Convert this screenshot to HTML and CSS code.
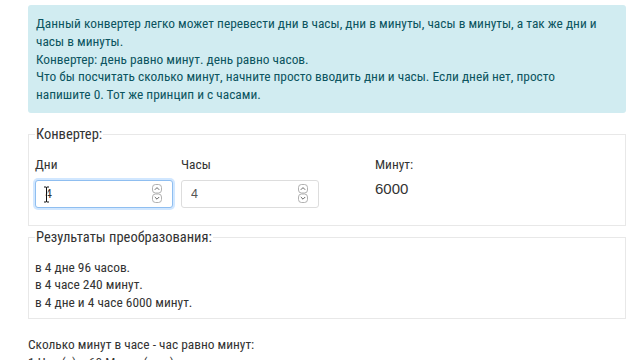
FILE: index.html
```html
<!DOCTYPE html>
<html lang="ru">
<head>
    <meta charset="UTF-8">
    <meta name="viewport" content="width=device-width, initial-scale=1.0">
    <title>Конвертер дней в минуты</title>
    <link rel="stylesheet" href="styles.css">
</head>
<body>
<div class="container">
    <div class="alert">
        Данный конвертер легко может перевести дни в часы, дни в минуты, часы в минуты, а так же дни и часы в минуты.<br>
        Конвертер: день равно минут. день равно часов.<br>
        Что бы посчитать сколько минут, начните просто вводить дни и часы. Если дней нет, просто напишите 0. Тот же принцип и с часами.
    </div>

    <fieldset class="box converter">
        <legend>Конвертер:</legend>
        <div class="row">
            <div class="field">
                <label for="days">Дни</label>
                <div class="input-wrap">
                    <input type="text" id="days" class="focused" value="4">
                    <span class="spin">
                        <svg width="10" height="19" viewBox="0 0 10 19">
                            <rect x="0.5" y="0.5" width="9" height="8.5" rx="3" fill="#fff" stroke="#a8a8a8" stroke-width="0.9"/>
                            <path d="M2.8 5.8 L5 3.6 L7.2 5.8" fill="none" stroke="#666" stroke-width="1"/>
                            <rect x="0.5" y="10" width="9" height="8.5" rx="3" fill="#fff" stroke="#a8a8a8" stroke-width="0.9"/>
                            <path d="M2.8 13 L5 15.2 L7.2 13" fill="none" stroke="#666" stroke-width="1"/>
                        </svg>
                    </span>
                    <span class="ibeam">
                        <svg width="7" height="17" viewBox="0 0 7 17">
                            <path d="M1 1 H3 Q3.5 1 3.5 2 V15 Q3.5 16 3 16 H1 M6 1 H4 Q3.5 1 3.5 2 M3.5 15 Q3.5 16 4 16 H6" fill="none" stroke="#fff" stroke-width="2.4"/>
                            <path d="M1 1 H3 Q3.5 1 3.5 2 V15 Q3.5 16 3 16 H1 M6 1 H4 Q3.5 1 3.5 2 M3.5 15 Q3.5 16 4 16 H6" fill="none" stroke="#111" stroke-width="1"/>
                        </svg>
                    </span>
                </div>
            </div>
            <div class="field">
                <label for="hours">Часы</label>
                <div class="input-wrap">
                    <input type="text" id="hours" value="4">
                    <span class="spin">
                        <svg width="10" height="19" viewBox="0 0 10 19">
                            <rect x="0.5" y="0.5" width="9" height="8.5" rx="3" fill="#fff" stroke="#a8a8a8" stroke-width="0.9"/>
                            <path d="M2.8 5.8 L5 3.6 L7.2 5.8" fill="none" stroke="#666" stroke-width="1"/>
                            <rect x="0.5" y="10" width="9" height="8.5" rx="3" fill="#fff" stroke="#a8a8a8" stroke-width="0.9"/>
                            <path d="M2.8 13 L5 15.2 L7.2 13" fill="none" stroke="#666" stroke-width="1"/>
                        </svg>
                    </span>
                </div>
            </div>
            <div class="field result">
                <label>Минут:</label>
                <div class="total">6000</div>
            </div>
        </div>
    </fieldset>

    <fieldset class="box results">
        <legend>Результаты преобразования:</legend>
        <p>в 4 дне 96 часов.</p>
        <p>в 4 часе 240 минут.</p>
        <p>в 4 дне и 4 часе 6000 минут.</p>
    </fieldset>

    <div class="info">
        <p>Сколько минут в часе - час равно минут:</p>
        <p>1 Час (ч) = 60 Минут (мин)</p>
    </div>
</div>
</body>
</html>
```

FILE: styles.css
```css
body {
    margin: 0;
    font-family: Roboto, 'Liberation Sans', Arial, sans-serif;
    font-stretch: condensed;
    font-size: 13.4px;
    color: #333;
    background: #fff;
}

.container {
    width: 598px;
    margin-left: 28px;
    padding-top: 5px;
}

.alert {
    background: #d1ecf1;
    color: #0c5460;
    border-radius: 3px;
    padding: 10px 22px 9px 8px;
    line-height: 17.75px;
}

.box {
    margin: 14px 0 0 0;
    padding: 14px 6px 17px 6px;
    border: 1px solid #e8e8e8;
}

.box legend {
    padding: 0 1px;
    font-size: 14.5px;
    line-height: 16px;
}

.row {
    display: grid;
    grid-template-columns: 146px 194px auto;
}

.field label {
    display: block;
    line-height: 16px;
    margin-bottom: 7px;
}

.input-wrap {
    position: relative;
    width: 138px;
}

.input-wrap input {
    box-sizing: border-box;
    width: 138px;
    height: 28px;
    padding: 0 9px;
    border: 1px solid #ddd;
    border-radius: 3px;
    font-family: 'Liberation Sans', Arial, sans-serif;
    font-stretch: normal;
    font-size: 12.5px;
    color: #555;
    outline: none;
}

.input-wrap input.focused {
    border-color: #8fbef0;
    box-shadow: 0 0 0 2px rgba(0, 123, 255, 0.18);
    color: #333;
}

.spin {
    position: absolute;
    right: 11px;
    top: 4px;
    line-height: 0;
}

.ibeam {
    position: absolute;
    left: 8px;
    top: 6px;
    line-height: 0;
}

.total {
    font-family: 'Liberation Sans', Arial, sans-serif;
    font-stretch: normal;
    font-size: 15px;
    line-height: 18px;
    margin-top: 4px;
}

.results {
    margin-top: 4px;
    padding-top: 13px;
    padding-bottom: 7px;
}

.results p {
    margin: 0;
    line-height: 17.5px;
}

.info {
    margin-top: 17px;
}

.info p {
    margin: 0;
    line-height: 18px;
}
```
